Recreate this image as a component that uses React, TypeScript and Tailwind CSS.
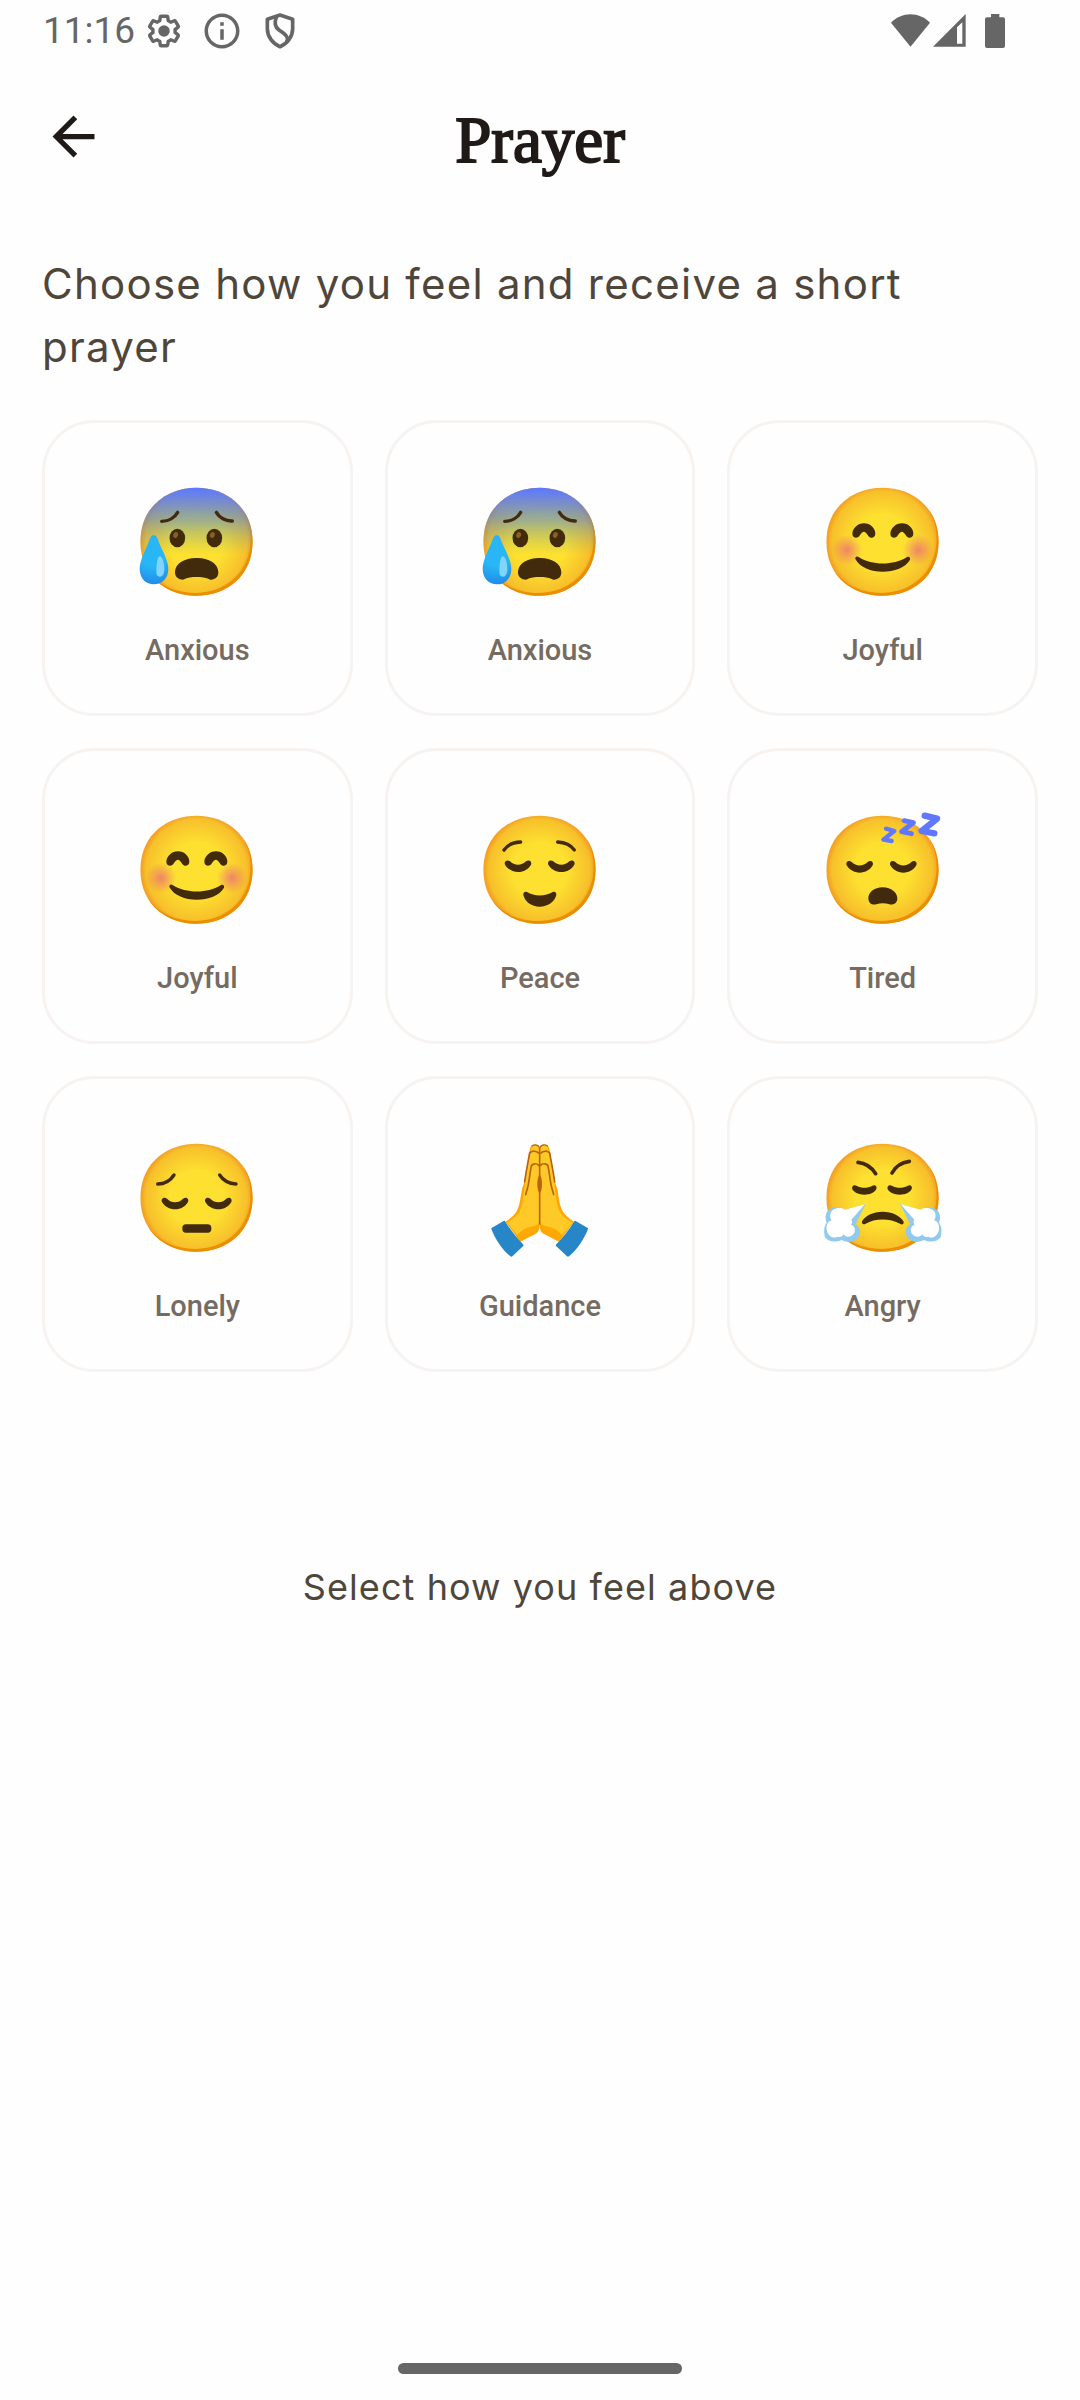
import { useId } from "react";
import type { ReactNode } from "react";
import { MdArrowBack, MdInfoOutline } from "react-icons/md";

const INK = "#422B0D";

interface FaceProps {
  children: ReactNode;
}

function EmojiFrame({ children }: FaceProps) {
  return (
    <svg viewBox="0 0 372 372" className="size-[124px]" aria-hidden="true">
      {children}
    </svg>
  );
}

// Round yellow head shared by every face
function Head() {
  const id = useId();
  return (
    <g transform="scale(2.9)">
      <radialGradient id={id} cx="63.6" cy="62.9" r="56.96" gradientUnits="userSpaceOnUse">
        <stop offset=".5" stopColor="#FDE030" />
        <stop offset=".92" stopColor="#F7C02B" />
        <stop offset="1" stopColor="#F4A223" />
      </radialGradient>
      <path
        fill={`url(#${id})`}
        d="M63.6 118.8c-27.9 0-58-17.5-58-55.9S35.7 7 63.6 7c15.5 0 29.8 5.1 40.4 14.4 11.5 10.2 17.6 24.6 17.6 41.5s-6.1 31.2-17.6 41.4c-10.6 9.3-25 14.5-40.4 14.5z"
      />
      <path
        fill="#EB8F00"
        d="M111.49 29.67c5.33 8.6 8.11 18.84 8.11 30.23 0 16.9-6.1 31.2-17.6 41.4-10.6 9.3-25 14.5-40.4 14.5-18.06 0-37-7.35-48.18-22.94 10.76 17.66 31 25.94 50.18 25.94 15.4 0 29.8-5.2 40.4-14.5 11.5-10.2 17.6-24.5 17.6-41.4 0-12.74-3.47-24.06-10.11-33.23z"
      />
    </g>
  );
}

function ClosedEye({ x, y }: { x: number; y: number }) {
  return (
    <path
      transform={`translate(${x} ${y})`}
      fill={INK}
      d="M16 3C29 17 51 17 64 3C73-4 83 3 79 13C72 26 57 35 40 35C24 35 8 26 1 13C-3 3 7-4 16 3Z"
    />
  );
}

function AnxiousFace() {
  const id = useId();
  return (
    <EmojiFrame>
      <Head />
      <linearGradient id={`${id}b`} x1="0" y1="7" x2="0" y2="76" gradientUnits="userSpaceOnUse">
        <stop offset="0" stopColor="#5D78FF" />
        <stop offset=".12" stopColor="#5F7EF5" stopOpacity=".92" />
        <stop offset=".5" stopColor="#5D8CCB" stopOpacity=".58" />
        <stop offset="1" stopColor="#7FB07F" stopOpacity="0" />
      </linearGradient>
      <path
        transform="scale(2.9)"
        fill={`url(#${id}b)`}
        d="M63.6 118.8c-27.9 0-58-17.5-58-55.9S35.7 7 63.6 7c15.5 0 29.8 5.1 40.4 14.4 11.5 10.2 17.6 24.6 17.6 41.5s-6.1 31.2-17.6 41.4c-10.6 9.3-25 14.5-40.4 14.5z"
      />
      <g transform="translate(-317 -214)">
        <g fill="none" stroke={INK} strokeWidth="10" strokeLinecap="round">
          <path d="M397 335c20 0 39-11 48-27" />
          <path d="M561 308c9 16 28 27 48 26" />
        </g>
        <g fill={INK}>
          <ellipse cx="444" cy="385" rx="23.5" ry="28" />
          <ellipse cx="555" cy="385" rx="23.5" ry="28" />
          <path d="M502 445C535 444 567 460 567 488C567 503 556 511 543 510C530 503 515 502 502 502C489 502 474 503 461 510C448 510 437 503 437 488C437 460 469 444 502 445Z" />
        </g>
        <g fill="#896024">
          <ellipse cx="439" cy="376" rx="7" ry="9" transform="rotate(24 439 376)" />
          <ellipse cx="549" cy="376" rx="7" ry="9" transform="rotate(24 549 376)" />
        </g>
        <radialGradient id={`${id}t`} cx="372" cy="430" r="100" gradientUnits="userSpaceOnUse">
          <stop offset=".4" stopColor="#29B6F6" />
          <stop offset="1" stopColor="#1E88E5" />
        </radialGradient>
        <path
          fill={`url(#${id}t)`}
          d="M373 377C380 377 383 383 387 393C397 420 417 450 417 478C417 507 397 524 374 524C350 524 331 506 331 478C331 450 352 415 360 391C364 382 367 377 373 377Z"
        />
        <path
          fill="#81D4FA"
          d="M391 440C398 440 405 458 405 478C405 493 400 501 391 501C385 501 381 497 381 488C381 460 385 440 391 440Z"
        />
      </g>
    </EmojiFrame>
  );
}

function JoyfulFace() {
  const id = useId();
  const eye =
    "M191 191C210 191 225 206 225 222C225 234 211 239 204 229C198 219 194 216 191 216C187 216 183 219 177 229C170 238 156 234 156 222C157 206 172 191 191 191Z";
  return (
    <EmojiFrame>
      <Head />
      <g transform="translate(-62 -64)">
        <radialGradient id={id}>
          <stop offset="0" stopColor="#ED7770" stopOpacity=".85" />
          <stop offset=".4" stopColor="#ED7770" stopOpacity=".5" />
          <stop offset="1" stopColor="#ED7770" stopOpacity="0" />
        </radialGradient>
        <circle cx="140" cy="271" r="46" fill={`url(#${id})`} />
        <circle cx="353" cy="271" r="46" fill={`url(#${id})`} />
        <g fill={INK}>
          <path d={eye} />
          <path d={eye} transform="translate(114 0)" />
          <path d="M176 293C215 318 280 318 319 293C325 289 331 294 329 300C316 324 282 336 247 336C212 336 179 324 165 298C164 291 170 288 176 293Z" />
        </g>
      </g>
    </EmojiFrame>
  );
}

function PeaceFace() {
  return (
    <EmojiFrame>
      <Head />
      <ClosedEye x={80} y={154} />
      <ClosedEye x={210} y={154} />
      <g transform="translate(-56 -55)">
        <g fill="none" stroke={INK} strokeWidth="10" strokeLinecap="round">
          <path d="M134 178C143 164 163 155 184 154" />
          <path d="M295 154C316 155 335 164 345 178" />
        </g>
        <path
          fill={INK}
          d="M203 304C225 318 258 318 280 304C287 301 292 306 291 313C286 334 265 348 241 348C217 348 197 334 192 313C191 306 196 301 203 304Z"
        />
      </g>
    </EmojiFrame>
  );
}

function TiredFace() {
  return (
    <EmojiFrame>
      <Head />
      <ClosedEye x={76} y={156} />
      <ClosedEye x={207} y={156} />
      <g transform="translate(-62 -55)">
        <path
          fill={INK}
          d="M247 290C273 290 291 306 291 324C291 338 277 344 267 341C255 337 240 337 228 341C215 344 204 338 204 322C204 306 221 290 247 290Z"
        />
        <g fill="none" stroke="#5F78FF" strokeLinecap="round" strokeLinejoin="round">
          <polyline points="257,114 282,121 249,147 274,151" strokeWidth="13" />
          <polyline points="312,90 339,96 304,123 333,129" strokeWidth="15" />
          <polyline points="373,75 410,84 364,121 402,128" strokeWidth="19" />
        </g>
      </g>
    </EmojiFrame>
  );
}

function LonelyFace() {
  return (
    <EmojiFrame>
      <Head />
      <ClosedEye x={80} y={182} />
      <ClosedEye x={210} y={182} />
      <g transform="translate(-77 -49)">
        <g fill="none" stroke={INK} strokeWidth="10" strokeLinecap="round">
          <path d="M145 190C166 190 183 180 194 163" />
          <path d="M331 163C342 180 358 189 380 190" />
        </g>
        <rect x="219" y="311" width="87" height="25" rx="11" fill={INK} />
      </g>
    </EmojiFrame>
  );
}

function Steam() {
  return (
    <>
      <path
        fill="#92CAED"
        d="M196 250L133 268C124 258 104 258 91 264C77 271 72 288 79 306C69 320 71 335 74 350C84 364 105 366 124 358C145 368 165 364 174 350C182 337 181 322 166 310Z"
      />
      <path
        fill="#FFFFFF"
        d="M194 251L134 267C124 258 98 260 91 276C88 284 89 293 94 299C80 303 76 318 80 331C84 347 99 355 111 348C119 351 127 347 129 341C137 352 154 350 161 338C167 326 162 316 152 312C157 306 156 302 153 297Z"
      />
    </>
  );
}

function AngryFace() {
  const eye =
    "M170 196C182 203 203 203 215 196C224 190 231 197 228 205C222 217 208 222 192 222C176 222 162 216 156 206C153 197 160 190 170 196Z";
  return (
    <EmojiFrame>
      <Head />
      <g transform="translate(-62 -49)">
        <g fill="none" stroke={INK} strokeWidth="11" strokeLinecap="round">
          <path d="M173 125C195 127 213 139 226 159" />
          <path d="M275 157C285 138 303 125 327 122" />
        </g>
        <g fill={INK}>
          <path d={eye} />
          <path d={eye} transform="translate(106 0)" />
          <path d="M247 273C275 273 300 285 310 303C311 310 305 314 299 309C270 292 223 292 196 309C189 313 183 309 185 302C193 286 218 273 247 273Z" />
        </g>
        <Steam />
        <g transform="translate(495 0) scale(-1 1)">
          <Steam />
        </g>
      </g>
    </EmojiFrame>
  );
}

function Hand() {
  return (
    <>
      <path
        fill="#FFA803"
        d="M241 80C236 70 215 70 212 82L195 185L188 205C183 230 183 250 172 272C165 285 150 295 138 303L183 363L228 340C238 334 241 325 241 312Z"
      />
      <path
        fill="#FFCA28"
        d="M241 80C236 72 217 72 216 84L201 150L194 215C190 240 190 258 178 277C170 290 155 298 143 306L174 343C190 325 205 320 222 317C232 315 238 311 241 305Z"
      />
      <g fill="none" stroke="#B96410" strokeWidth="5" strokeLinecap="round">
        <path d="M212 96C218 90 232 90 237 97" />
        <path d="M218 76C224 71 236 72 239 79" strokeWidth="4" />
        <path d="M196 184C198 165 206 125 211 97" />
        <path d="M199 222C202 208 207 200 209 180L215 140C217 127 232 127 238 134" />
      </g>
      <path
        fill="#2786C8"
        d="M98 321L133 301C135 300 137 301 138 303C152 326 171 350 191 371C193 373 193 375 191 377L159 407C157 409 155 409 153 407C130 389 108 356 96 325C95 323 96 322 98 321Z"
      />
    </>
  );
}

function PrayingHands() {
  return (
    <EmojiFrame>
      <g transform="translate(-56 -49)">
        <Hand />
        <g transform="translate(482 0) scale(-1 1)">
          <Hand />
        </g>
        <path d="M241 80V312" stroke="#B96410" strokeWidth="5" />
        <ellipse cx="241" cy="190" rx="7" ry="27" fill="#B96410" />
      </g>
    </EmojiFrame>
  );
}

const moods = [
  { label: "Anxious", Icon: AnxiousFace },
  { label: "Anxious", Icon: AnxiousFace },
  { label: "Joyful", Icon: JoyfulFace },
  { label: "Joyful", Icon: JoyfulFace },
  { label: "Peace", Icon: PeaceFace },
  { label: "Tired", Icon: TiredFace },
  { label: "Lonely", Icon: LonelyFace },
  { label: "Guidance", Icon: PrayingHands },
  { label: "Angry", Icon: AngryFace },
];

function StatusBar() {
  return (
    <div className="flex h-[62px] items-center justify-between pl-[43px] pr-[75px] text-[#666666]">
      <div className="flex items-center gap-4">
        <span className="-mr-2 font-['Roboto',sans-serif] text-[37px] leading-[42px]">11:16</span>
        <svg viewBox="0 0 24 24" className="size-[42px]" fill="none" aria-hidden="true">
          <path
            transform="translate(1.44 1.44) scale(.88)"
            stroke="currentColor"
            strokeWidth="2.2"
            strokeLinejoin="round"
            d="M19.14 12.94c.04-.3.06-.61.06-.94 0-.32-.02-.64-.07-.94l2.03-1.58c.18-.14.23-.41.12-.61l-1.92-3.32c-.12-.22-.37-.29-.59-.22l-2.39.96c-.5-.38-1.03-.7-1.62-.94l-.36-2.54c-.04-.24-.24-.41-.48-.41h-3.84c-.24 0-.43.17-.47.41l-.36 2.54c-.59.24-1.13.57-1.62.94l-2.39-.96c-.22-.08-.47 0-.59.22L2.74 8.87c-.12.21-.08.47.12.61l2.03 1.58c-.05.3-.09.63-.09.94s.02.64.07.94l-2.03 1.58c-.18.14-.23.41-.12.61l1.92 3.32c.12.22.37.29.59.22l2.39-.96c.5.38 1.03.7 1.62.94l.36 2.54c.05.24.24.41.48.41h3.84c.24 0 .44-.17.47-.41l.36-2.54c.59-.24 1.13-.56 1.62-.94l2.39.96c.22.08.47 0 .59-.22l1.92-3.32c.12-.22.07-.47-.12-.61l-2.01-1.58z"
          />
          <circle cx="12" cy="12" r="3.3" fill="currentColor" />
        </svg>
        <MdInfoOutline className="size-[42px]" />
        <svg
          viewBox="0 0 126 126"
          className="size-[42px]"
          fill="none"
          stroke="currentColor"
          strokeWidth="11"
          strokeLinejoin="round"
          aria-hidden="true"
        >
          <path d="M63 15L101 28V56C101 80 84 102 63 110C42 102 25 80 25 56V28Z" />
          <path d="M53 19C46 36 46 50 60 60L73 69C86 79 88 86 83 96" />
        </svg>
      </div>
      <div className="flex items-center gap-[3px]">
        <svg viewBox="0 0 117 102" className="h-[34px] w-[39px]" fill="currentColor" aria-hidden="true">
          <path d="M0 26C32-8 85-8 117 26L58.5 98Z" />
        </svg>
        <svg viewBox="0 0 99 102" className="h-[34px] w-[33px]" fill="currentColor" aria-hidden="true">
          <path fillRule="evenodd" d="M0 98L98 0V98ZM72 40V89H88V25Z" />
        </svg>
        <svg viewBox="0 0 60 102" className="ml-4 h-[34px] w-[20px]" fill="currentColor" aria-hidden="true">
          <path d="M18 0H43V10H54Q60 10 60 16V96Q60 102 54 102H6Q0 102 0 96V16Q0 10 6 10H18Z" />
        </svg>
      </div>
    </div>
  );
}

export default function App() {
  return (
    <div className="flex min-h-screen flex-col bg-[#fefefe] font-['Inter',sans-serif] text-[#4f463b]">
      <StatusBar />

      <header className="grid h-[148px] grid-cols-[63px_1fr_63px] items-center px-[42px]">
        <button type="button" aria-label="Back" className="text-[#1f1a17]">
          <MdArrowBack className="size-[63px]" />
        </button>
        <h1 className="pt-2 text-center font-['Liberation_Serif',serif] text-[65px] leading-[72px] text-[#1f1a17] [-webkit-text-stroke:2px_#1f1a17]">
          Prayer
        </h1>
      </header>

      <main className="px-[42px] pt-[42px]">
        <p className="text-[42px] leading-[63px] tracking-[0.03em]">
          Choose how you feel and receive a short prayer
        </p>

        <div className="mt-[42px] grid grid-cols-3 gap-8">
          {moods.map(({ label, Icon }, i) => (
            <button
              key={`${label}-${i}`}
              type="button"
              className="flex flex-col items-center gap-7 rounded-[52px] border-3 border-[#f7f3f1] pt-[58px] pb-[46px]"
            >
              <Icon />
              <span className="font-['Roboto',sans-serif] text-[29px] leading-[34px] font-medium text-[#756b61]">
                {label}
              </span>
            </button>
          ))}
        </div>

        <p className="mt-47 text-center text-[36px] leading-[55px] tracking-[0.03em]">
          Select how you feel above
        </p>
      </main>

      <div className="mx-auto mt-auto mb-[26px] h-[11px] w-[284px] rounded-full bg-[#666666]" />
    </div>
  );
}
